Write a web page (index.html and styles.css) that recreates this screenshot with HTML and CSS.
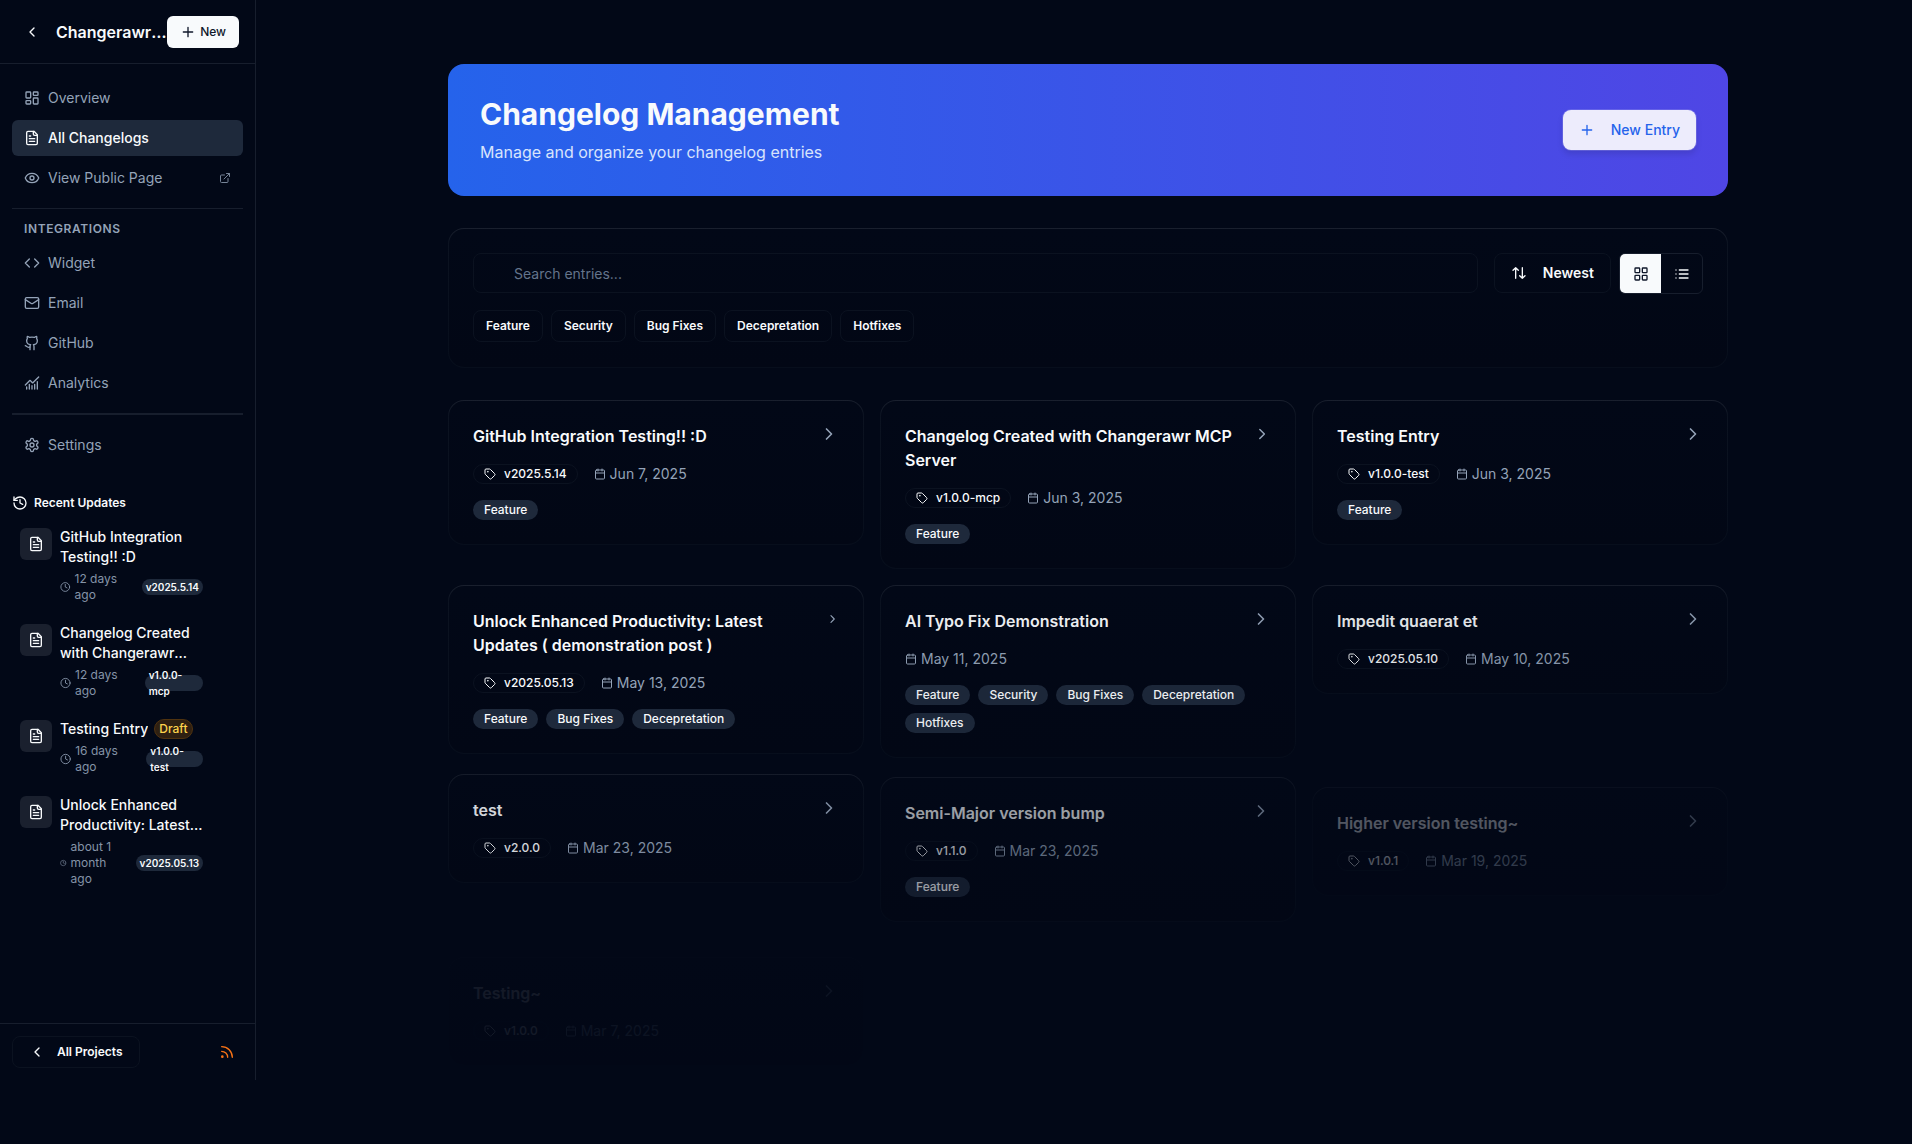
FILE: index.html
```html
<!DOCTYPE html>
<html lang="en">
<head>
<meta charset="utf-8">
<title>Changelog Management</title>
<link rel="stylesheet" href="styles.css">
</head>
<body>
<svg class="sprite" aria-hidden="true">
  <symbol id="chevron-left" viewBox="0 0 24 24"><path d="m15 18-6-6 6-6"/></symbol>
  <symbol id="chevron-right" viewBox="0 0 24 24"><path d="m9 18 6-6-6-6"/></symbol>
  <symbol id="plus" viewBox="0 0 24 24"><path d="M5 12h14M12 5v14"/></symbol>
  <symbol id="dashboard" viewBox="0 0 24 24"><rect width="7" height="9" x="3" y="3" rx="1"/><rect width="7" height="5" x="14" y="3" rx="1"/><rect width="7" height="9" x="14" y="12" rx="1"/><rect width="7" height="5" x="3" y="16" rx="1"/></symbol>
  <symbol id="file-text" viewBox="0 0 24 24"><path d="M15 2H6a2 2 0 0 0-2 2v16a2 2 0 0 0 2 2h12a2 2 0 0 0 2-2V7Z"/><path d="M14 2v4a2 2 0 0 0 2 2h4M10 9H8M16 13H8M16 17H8"/></symbol>
  <symbol id="eye" viewBox="0 0 24 24"><path d="M2.062 12.348a1 1 0 0 1 0-.696 10.75 10.75 0 0 1 19.876 0 1 1 0 0 1 0 .696 10.75 10.75 0 0 1-19.876 0"/><circle cx="12" cy="12" r="3"/></symbol>
  <symbol id="external" viewBox="0 0 24 24"><path d="M15 3h6v6M10 14 21 3M18 13v6a2 2 0 0 1-2 2H5a2 2 0 0 1-2-2V8a2 2 0 0 1 2-2h6"/></symbol>
  <symbol id="code" viewBox="0 0 24 24"><path d="m16 18 6-6-6-6M8 6l-6 6 6 6"/></symbol>
  <symbol id="mail" viewBox="0 0 24 24"><rect width="20" height="16" x="2" y="4" rx="2"/><path d="m22 7-8.97 5.7a1.94 1.94 0 0 1-2.06 0L2 7"/></symbol>
  <symbol id="github" viewBox="0 0 24 24"><path d="M15 22v-4a4.8 4.8 0 0 0-1-3.5c3 0 6-2 6-5.5.08-1.25-.27-2.48-1-3.5.28-1.15.28-2.35 0-3.5 0 0-1 0-3 1.500-2.640-.5-5.360-.5-8 0C6 2 5 2 5 2c-.3 1.150-.3 2.350 0 3.500A5.403 5.403 0 0 0 4 9c0 3.500 3 5.500 6 5.500-.39.49-.68 1.050-.85 1.650-.17.6-.22 1.230-.15 1.850v4"/><path d="M9 18c-4.510 2-5-2-7-2"/></symbol>
  <symbol id="analytics" viewBox="0 0 24 24"><path d="M12 16v5M16 14v7M20 10v11M22 3l-8.646 8.646a.5.5 0 0 1-.708 0L9.354 8.354a.5.5 0 0 0-.707 0L2 15M4 18v3M8 14v7"/></symbol>
  <symbol id="settings" viewBox="0 0 24 24"><path d="M12.220 2h-.44a2 2 0 0 0-2 2v.18a2 2 0 0 1-1 1.730l-.43.25a2 2 0 0 1-2 0l-.15-.08a2 2 0 0 0-2.730.73l-.22.38a2 2 0 0 0 .73 2.730l.15.1a2 2 0 0 1 1 1.720v.51a2 2 0 0 1-1 1.740l-.15.09a2 2 0 0 0-.73 2.730l.22.38a2 2 0 0 0 2.730.73l.15-.08a2 2 0 0 1 2 0l.43.25a2 2 0 0 1 1 1.730V20a2 2 0 0 0 2 2h.44a2 2 0 0 0 2-2v-.18a2 2 0 0 1 1-1.730l.43-.25a2 2 0 0 1 2 0l.15.08a2 2 0 0 0 2.730-.73l.22-.39a2 2 0 0 0-.73-2.730l-.15-.08a2 2 0 0 1-1-1.740v-.5a2 2 0 0 1 1-1.740l.15-.09a2 2 0 0 0 .73-2.730l-.22-.38a2 2 0 0 0-2.730-.73l-.15.08a2 2 0 0 1-2 0l-.43-.25a2 2 0 0 1-1-1.730V4a2 2 0 0 0-2-2z"/><circle cx="12" cy="12" r="3"/></symbol>
  <symbol id="history" viewBox="0 0 24 24"><path d="M3 12a9 9 0 1 0 9-9 9.750 9.750 0 0 0-6.740 2.740L3 8"/><path d="M3 3v5h5M12 7v5l4 2"/></symbol>
  <symbol id="clock" viewBox="0 0 24 24"><circle cx="12" cy="12" r="10"/><path d="M12 6v6l4 2"/></symbol>
  <symbol id="rss" viewBox="0 0 24 24"><path d="M4 11a9 9 0 0 1 9 9M4 4a16 16 0 0 1 16 16"/><circle cx="5" cy="19" r="1"/></symbol>
  <symbol id="sort" viewBox="0 0 24 24"><path d="m3 8 4-4 4 4M7 4v16M21 16l-4 4-4-4M17 20V4"/></symbol>
  <symbol id="grid" viewBox="0 0 24 24"><rect width="7" height="7" x="3" y="3" rx="1"/><rect width="7" height="7" x="14" y="3" rx="1"/><rect width="7" height="7" x="14" y="14" rx="1"/><rect width="7" height="7" x="3" y="14" rx="1"/></symbol>
  <symbol id="list" viewBox="0 0 24 24"><path d="M3 12h.01M3 18h.01M3 6h.01M8 12h13M8 18h13M8 6h13"/></symbol>
  <symbol id="tag" viewBox="0 0 24 24"><path d="M12.586 2.586A2 2 0 0 0 11.172 2H4a2 2 0 0 0-2 2v7.172a2 2 0 0 0 .586 1.414l8.704 8.704a2.426 2.426 0 0 0 3.420 0l6.580-6.580a2.426 2.426 0 0 0 0-3.420z"/><circle cx="7.500" cy="7.500" r=".5"/></symbol>
  <symbol id="calendar" viewBox="0 0 24 24"><path d="M8 2v4M16 2v4M3 10h18"/><rect width="18" height="18" x="3" y="4" rx="2"/></symbol>
</svg>

<div class="layout">
  <aside class="sidebar">
    <header class="side-header">
      <button class="icon-button" aria-label="Back"><svg class="icon"><use href="#chevron-left"/></svg></button>
      <h2 class="project">Changerawr Demo Project</h2>
      <button class="new-button"><svg class="icon"><use href="#plus"/></svg>New</button>
    </header>

    <div class="side-body">
      <nav class="nav">
        <div class="nav-group">
          <a class="nav-link" href="#"><svg class="icon"><use href="#dashboard"/></svg>Overview</a>
          <a class="nav-link active" href="#" aria-current="page"><svg class="icon"><use href="#file-text"/></svg>All Changelogs</a>
          <a class="nav-link" href="#"><svg class="icon"><use href="#eye"/></svg>View Public Page<svg class="icon small trailing"><use href="#external"/></svg></a>
        </div>
        <div class="nav-divider"></div>
        <h3 class="nav-heading">INTEGRATIONS</h3>
        <div class="nav-group">
          <a class="nav-link" href="#"><svg class="icon"><use href="#code"/></svg>Widget</a>
          <a class="nav-link" href="#"><svg class="icon"><use href="#mail"/></svg>Email</a>
          <a class="nav-link" href="#"><svg class="icon"><use href="#github"/></svg>GitHub</a>
          <a class="nav-link" href="#"><svg class="icon"><use href="#analytics"/></svg>Analytics</a>
        </div>
        <div class="nav-divider double"></div>
        <a class="nav-link" href="#"><svg class="icon"><use href="#settings"/></svg>Settings</a>
      </nav>

      <section class="recent">
        <h3 class="recent-heading"><svg class="icon"><use href="#history"/></svg>Recent Updates</h3>
        <ul class="updates">
          <li class="update">
            <span class="update-icon"><svg class="icon"><use href="#file-text"/></svg></span>
            <div class="update-text">
              <a class="update-title" href="#">GitHub Integration Testing!! :D</a>
              <div class="update-meta"><span class="ago"><svg class="icon small"><use href="#clock"/></svg><span>12 days ago</span></span><span class="mini-badge">v2025.5.14</span></div>
            </div>
          </li>
          <li class="update">
            <span class="update-icon"><svg class="icon"><use href="#file-text"/></svg></span>
            <div class="update-text">
              <a class="update-title" href="#">Changelog Created with Changerawr MCP Server</a>
              <div class="update-meta"><span class="ago"><svg class="icon small"><use href="#clock"/></svg><span>12 days ago</span></span><span class="mini-badge">v1.0.0-mcp</span></div>
            </div>
          </li>
          <li class="update">
            <span class="update-icon"><svg class="icon"><use href="#file-text"/></svg></span>
            <div class="update-text">
              <div class="title-row"><a class="update-title" href="#">Testing Entry</a><span class="draft">Draft</span></div>
              <div class="update-meta"><span class="ago"><svg class="icon small"><use href="#clock"/></svg><span>16 days ago</span></span><span class="mini-badge">v1.0.0-test</span></div>
            </div>
          </li>
          <li class="update">
            <span class="update-icon"><svg class="icon"><use href="#file-text"/></svg></span>
            <div class="update-text">
              <a class="update-title" href="#">Unlock Enhanced Productivity: Latest Updates ( demonstration post )</a>
              <div class="update-meta"><span class="ago"><svg class="icon small"><use href="#clock"/></svg><span>about 1 month ago</span></span><span class="mini-badge">v2025.05.13</span></div>
            </div>
          </li>
        </ul>
      </section>
    </div>

    <footer class="side-footer">
      <button class="projects-button"><svg class="icon"><use href="#chevron-left"/></svg>All Projects</button>
      <button class="icon-button rss" aria-label="RSS feed"><svg class="icon"><use href="#rss"/></svg></button>
    </footer>
  </aside>

  <main class="main">
    <div class="container">
      <section class="hero">
        <div>
          <h1 class="hero-title">Changelog Management</h1>
          <p class="hero-text">Manage and organize your changelog entries</p>
        </div>
        <button class="new-entry"><svg class="icon"><use href="#plus"/></svg>New Entry</button>
      </section>

      <section class="panel filters">
        <div class="filter-row">
          <input class="search" type="text" placeholder="Search entries..." aria-label="Search entries">
          <button class="sort"><svg class="icon"><use href="#sort"/></svg>Newest</button>
          <div class="view-toggle">
            <button class="view on" aria-label="Grid view"><svg class="icon"><use href="#grid"/></svg></button>
            <button class="view" aria-label="List view"><svg class="icon"><use href="#list"/></svg></button>
          </div>
        </div>
        <div class="chips">
          <button class="chip">Feature</button>
          <button class="chip">Security</button>
          <button class="chip">Bug Fixes</button>
          <button class="chip">Decepretation</button>
          <button class="chip">Hotfixes</button>
        </div>
      </section>

      <section class="cards">
        <article class="panel card">
          <div class="card-head"><h3 class="card-title">GitHub Integration Testing!! :D</h3><svg class="icon chevron"><use href="#chevron-right"/></svg></div>
          <div class="meta"><span class="version"><svg class="icon small"><use href="#tag"/></svg>v2025.5.14</span><span class="date"><svg class="icon small"><use href="#calendar"/></svg>Jun 7, 2025</span></div>
          <div class="tags"><span class="tag">Feature</span></div>
        </article>
        <article class="panel card">
          <div class="card-head"><h3 class="card-title">Changelog Created with Changerawr MCP Server</h3><svg class="icon chevron"><use href="#chevron-right"/></svg></div>
          <div class="meta"><span class="version"><svg class="icon small"><use href="#tag"/></svg>v1.0.0-mcp</span><span class="date"><svg class="icon small"><use href="#calendar"/></svg>Jun 3, 2025</span></div>
          <div class="tags"><span class="tag">Feature</span></div>
        </article>
        <article class="panel card">
          <div class="card-head"><h3 class="card-title">Testing Entry</h3><svg class="icon chevron"><use href="#chevron-right"/></svg></div>
          <div class="meta"><span class="version"><svg class="icon small"><use href="#tag"/></svg>v1.0.0-test</span><span class="date"><svg class="icon small"><use href="#calendar"/></svg>Jun 3, 2025</span></div>
          <div class="tags"><span class="tag">Feature</span></div>
        </article>
        <article class="panel card">
          <div class="card-head"><h3 class="card-title">Unlock Enhanced Productivity: Latest Updates ( demonstration post )</h3><svg class="icon chevron"><use href="#chevron-right"/></svg></div>
          <div class="meta"><span class="version"><svg class="icon small"><use href="#tag"/></svg>v2025.05.13</span><span class="date"><svg class="icon small"><use href="#calendar"/></svg>May 13, 2025</span></div>
          <div class="tags"><span class="tag">Feature</span><span class="tag">Bug Fixes</span><span class="tag">Decepretation</span></div>
        </article>
        <article class="panel card fade-1">
          <div class="card-head"><h3 class="card-title">AI Typo Fix Demonstration</h3><svg class="icon chevron"><use href="#chevron-right"/></svg></div>
          <div class="meta"><span class="date"><svg class="icon small"><use href="#calendar"/></svg>May 11, 2025</span></div>
          <div class="tags"><span class="tag">Feature</span><span class="tag">Security</span><span class="tag">Bug Fixes</span><span class="tag">Decepretation</span><span class="tag">Hotfixes</span></div>
        </article>
        <article class="panel card fade-2">
          <div class="card-head"><h3 class="card-title">Impedit quaerat et</h3><svg class="icon chevron"><use href="#chevron-right"/></svg></div>
          <div class="meta"><span class="version"><svg class="icon small"><use href="#tag"/></svg>v2025.05.10</span><span class="date"><svg class="icon small"><use href="#calendar"/></svg>May 10, 2025</span></div>
        </article>
        <article class="panel card fade-3">
          <div class="card-head"><h3 class="card-title">test</h3><svg class="icon chevron"><use href="#chevron-right"/></svg></div>
          <div class="meta"><span class="version"><svg class="icon small"><use href="#tag"/></svg>v2.0.0</span><span class="date"><svg class="icon small"><use href="#calendar"/></svg>Mar 23, 2025</span></div>
        </article>
        <article class="panel card fade-4">
          <div class="card-head"><h3 class="card-title">Semi-Major version bump</h3><svg class="icon chevron"><use href="#chevron-right"/></svg></div>
          <div class="meta"><span class="version"><svg class="icon small"><use href="#tag"/></svg>v1.1.0</span><span class="date"><svg class="icon small"><use href="#calendar"/></svg>Mar 23, 2025</span></div>
          <div class="tags"><span class="tag">Feature</span></div>
        </article>
        <article class="panel card fade-5">
          <div class="card-head"><h3 class="card-title">Higher version testing~</h3><svg class="icon chevron"><use href="#chevron-right"/></svg></div>
          <div class="meta"><span class="version"><svg class="icon small"><use href="#tag"/></svg>v1.0.1</span><span class="date"><svg class="icon small"><use href="#calendar"/></svg>Mar 19, 2025</span></div>
        </article>
        <article class="panel card fade-6">
          <div class="card-head"><h3 class="card-title">Testing~</h3><svg class="icon chevron"><use href="#chevron-right"/></svg></div>
          <div class="meta"><span class="version"><svg class="icon small"><use href="#tag"/></svg>v1.0.0</span><span class="date"><svg class="icon small"><use href="#calendar"/></svg>Mar 7, 2025</span></div>
        </article>
      </section>
    </div>
  </main>
</div>
</body>
</html>
```
FILE: styles.css
```css
:root {
  --bg: #020817;
  --line: #171e2d;
  --faint: #0b1220;
  --fg: #f8fafc;
  --muted: #94a3b8;
  --fill: #1e293b;
}

* { box-sizing: border-box; }

body {
  margin: 0;
  background: var(--bg);
  color: var(--fg);
  font: 14px/20px Inter, sans-serif;
}

h1, h2, h3, p, ul { margin: 0; padding: 0; }
ul { list-style: none; }
a { color: inherit; text-decoration: none; }

button {
  margin: 0;
  padding: 0;
  border: 0;
  background: none;
  color: inherit;
  font: inherit;
  display: inline-flex;
  align-items: center;
  justify-content: center;
  white-space: nowrap;
}

.sprite { display: none; }

.icon {
  width: 16px;
  height: 16px;
  fill: none;
  stroke: currentColor;
  stroke-width: 2;
  stroke-linecap: round;
  stroke-linejoin: round;
}
.icon.small { width: 12px; height: 12px; }

.layout { display: flex; min-height: 100vh; }

/* Sidebar */
.sidebar {
  flex: none;
  width: 256px;
  height: calc(100vh - 64px);
  display: flex;
  flex-direction: column;
  border-right: 1px solid var(--line);
}

.side-header {
  display: flex;
  align-items: center;
  height: 64px;
  padding: 0 16px;
  border-bottom: 1px solid var(--line);
}
.icon-button { flex: none; width: 32px; height: 32px; }
.project {
  flex: 1;
  min-width: 0;
  margin-left: 8px;
  overflow: hidden;
  white-space: nowrap;
  text-overflow: ellipsis;
  font-size: 16px;
  line-height: 24px;
  font-weight: 600;
}
.new-button {
  flex: none;
  gap: 4px;
  height: 32px;
  padding: 0 13px;
  border-radius: 6px;
  background: var(--fg);
  color: #0f172a;
  font-size: 12px;
  font-weight: 500;
}

.side-body { flex: 1; min-height: 0; overflow: hidden; padding: 16px 12px; }

.nav-group { display: flex; flex-direction: column; gap: 4px; }
.nav-link {
  display: flex;
  align-items: center;
  gap: 8px;
  height: 36px;
  padding: 0 12px;
  border-radius: 6px;
  color: var(--muted);
}
.nav-link.active { background: var(--fill); color: var(--fg); font-weight: 500; }
.trailing { margin-left: auto; opacity: .8; }
.nav-divider { height: 1px; margin: 12px 0; background: var(--line); }
.nav-divider.double { height: 2px; }
.nav-heading {
  margin-bottom: 8px;
  padding: 0 12px;
  color: var(--muted);
  font-size: 12px;
  line-height: 16px;
  font-weight: 600;
  letter-spacing: 0.05em;
}

.recent { margin-top: 32px; padding-right: 32px; }
.recent-heading {
  display: flex;
  align-items: center;
  gap: 6px;
  margin-bottom: 8px;
  font-size: 12px;
  line-height: 16px;
  font-weight: 600;
}
.updates { display: flex; flex-direction: column; gap: 4px; }
.update { display: flex; gap: 8px; padding: 8px; }
.update-icon {
  flex: none;
  display: flex;
  align-items: center;
  justify-content: center;
  width: 32px;
  height: 32px;
  margin-top: 1px;
  border-radius: 6px;
  background: #1a202e;
}
.update-text { flex: 1; min-width: 0; }
.update-title {
  display: -webkit-box;
  -webkit-box-orient: vertical;
  -webkit-line-clamp: 2;
  overflow: hidden;
  font-weight: 500;
}
.title-row { display: flex; align-items: center; gap: 6px; height: 20px; }
.draft {
  padding: 1px 4px;
  border: 1px solid #50330f;
  border-radius: 10px;
  background: #2f2012;
  color: #fcd34d;
  font-size: 12px;
  line-height: 16px;
  font-weight: 500;
}
.update-meta {
  display: flex;
  align-items: center;
  justify-content: space-between;
  gap: 8px;
  margin-top: 4px;
  color: var(--muted);
  font-size: 12px;
  line-height: 16px;
}
.ago { display: flex; align-items: center; gap: 4px; opacity: .9; }
.mini-badge {
  display: flex;
  align-items: center;
  height: 16px;
  padding: 0 4px;
  border-radius: 8px;
  background: var(--fill);
  color: var(--fg);
  font-size: 10px;
  font-weight: 600;
}

.side-footer {
  display: flex;
  align-items: center;
  justify-content: space-between;
  padding: 12px;
  border-top: 1px solid var(--line);
}
.projects-button {
  gap: 12px;
  height: 32px;
  padding: 0 16px;
  border: 1px solid var(--faint);
  border-radius: 8px;
  font-size: 12px;
  font-weight: 600;
}
.rss { color: #f97316; }

/* Main column */
.main { flex: 1; min-width: 0; padding: 64px 24px 64px 32px; }
.container {
  display: flex;
  flex-direction: column;
  gap: 32px;
  max-width: 1280px;
  margin: 0 auto;
}

.hero {
  display: flex;
  align-items: center;
  justify-content: space-between;
  padding: 32px;
  border-radius: 16px;
  background: linear-gradient(to right, #2563eb, #4f46e5);
}
.hero-title { font-size: 30px; line-height: 36px; font-weight: 700; }
.hero-text { margin-top: 8px; color: #d8e4fc; font-size: 16px; line-height: 24px; }
.new-entry {
  gap: 16px;
  height: 40px;
  padding: 0 16px;
  border-radius: 8px;
  background: #edecfc;
  color: #2563eb;
  font-weight: 500;
  box-shadow: 0 0 0 1px rgba(255, 255, 255, .15), 0 4px 6px rgba(0, 0, 0, .12);
}

.panel {
  border: 1px solid transparent;
  border-radius: 16px;
  background:
    linear-gradient(#020817, #020715) padding-box,
    linear-gradient(to bottom, #1a202e, #0c1321 16px, #070e1c) border-box;
}

.filters { display: flex; flex-direction: column; gap: 16px; padding: 24px; }
.filter-row { display: flex; align-items: flex-start; gap: 8px; }
.search {
  flex: 1;
  min-width: 0;
  height: 40px;
  margin-right: 8px;
  padding: 0 40px;
  border: 1px solid var(--faint);
  border-radius: 8px;
  background: transparent;
  color: var(--fg);
  font: inherit;
}
.search::placeholder { color: #64748b; opacity: 1; }
.sort {
  gap: 16px;
  height: 40px;
  padding: 0 16px;
  border: 1px solid var(--faint);
  border-radius: 8px;
  font-weight: 600;
}
.view-toggle {
  display: flex;
  height: 41px;
  overflow: hidden;
  border: 1px solid var(--line);
  border-radius: 6px;
}
.view { width: 41px; }
.view.on { background: var(--fg); color: #0f172a; }
.chips { display: flex; flex-wrap: wrap; gap: 8px; padding-bottom: 1px; }
.chip {
  height: 32px;
  padding: 0 12px;
  border: 1px solid var(--faint);
  border-radius: 8px;
  font-size: 12px;
  font-weight: 600;
}

.cards {
  display: grid;
  grid-template-columns: repeat(3, minmax(0, 1fr));
  align-items: start;
  gap: 16px;
}
.card { padding: 23px 24px 24px; }
.card-head { display: flex; align-items: flex-start; justify-content: space-between; margin-bottom: 16px; }
.card-title { font-size: 16px; line-height: 24px; font-weight: 600; }
.chevron { width: 20px; height: 20px; color: var(--muted); }
.meta { display: flex; align-items: center; gap: 16px; }
.version {
  display: flex;
  align-items: center;
  gap: 8px;
  height: 20px;
  padding: 0 10px;
  border: 1px solid var(--faint);
  border-radius: 10px;
  font-size: 12px;
  font-weight: 500;
}
.date { display: flex; align-items: center; gap: 4px; color: var(--muted); }
.tags { display: flex; flex-wrap: wrap; gap: 8px; margin-top: 16px; }
.tag {
  height: 20px;
  padding: 0 11px;
  border-radius: 10px;
  background: var(--fill);
  font-size: 12px;
  font-weight: 500;
}

/* Staggered entrance: later cards are fainter and further down */
.fade-1 { opacity: .95; }
.fade-2 { opacity: .9; }
.fade-3 { opacity: .85; }
.fade-4 { opacity: .62; transform: translateY(3px); }
.fade-5 { opacity: .32; transform: translateY(13px); }
.fade-6 { opacity: .07; transform: translateY(22px); }
```
